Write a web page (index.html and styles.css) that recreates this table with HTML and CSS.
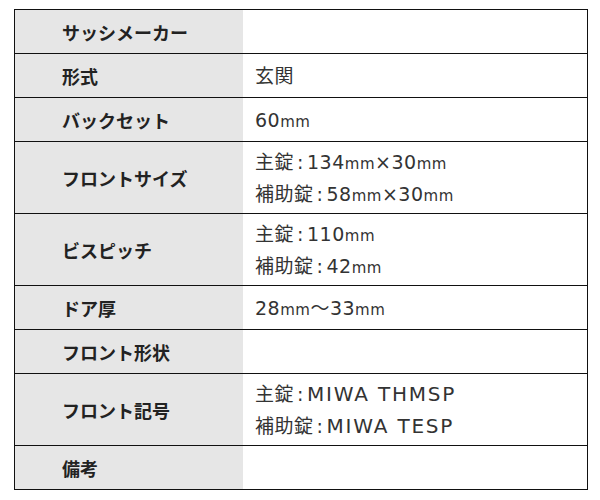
FILE: index.html
```html
<!DOCTYPE html>
<html lang="ja">
<head>
<meta charset="utf-8">
<link rel="stylesheet" href="styles.css">
</head>
<body>
<table class="spec">
  <tr><th>サッシメーカー</th><td></td></tr>
  <tr><th>形式</th><td>玄関</td></tr>
  <tr><th>バックセット</th><td>60<span class="u">mm</span></td></tr>
  <tr><th>フロントサイズ</th><td>主錠<span class="c">:</span>134<span class="u">mm</span>×30<span class="u">mm</span><br>補助錠<span class="c">:</span>58<span class="u">mm</span>×30<span class="u">mm</span></td></tr>
  <tr><th>ビスピッチ</th><td>主錠<span class="c">:</span>110<span class="u">mm</span><br>補助錠<span class="c">:</span>42<span class="u">mm</span></td></tr>
  <tr><th>ドア厚</th><td>28<span class="u">mm</span>〜33<span class="u">mm</span></td></tr>
  <tr><th>フロント形状</th><td></td></tr>
  <tr><th>フロント記号</th><td>主錠<span class="c">:</span><span class="code">MIWA THMSP</span><br>補助錠<span class="c">:</span><span class="code">MIWA TESP</span></td></tr>
  <tr><th>備考</th><td></td></tr>
</table>
</body>
</html>
```
FILE: styles.css
```css
html, body {
  margin: 0;
  padding: 0;
  background: #fff;
}
body {
  padding: 9px 0 0 14px;
}
.spec {
  border-collapse: collapse;
  width: 574px;
  border: 1px solid #111;
  line-height: 32px;
}
.spec tr {
  border-bottom: 1px solid #111;
}
.spec th {
  width: 181px;
  background: #e6e6e6;
  color: #222;
  font-family: "Noto Sans CJK JP", "Noto Sans", sans-serif;
  font-size: 18px;
  font-weight: bold;
  text-align: left;
  padding: 6px 0 5px 47px;
  vertical-align: middle;
}
.spec td {
  color: #333;
  font-family: "DejaVu Sans", "Noto Sans CJK JP", sans-serif;
  font-size: 19px;
  letter-spacing: 0.5px;
  padding: 4px 0 3px 12px;
  vertical-align: middle;
}
.u {
  font-size: 15px;
  line-height: 1;
}
.c {
  display: inline-block;
  width: 13px;
  text-align: center;
  line-height: 1;
}
.code {
  font-size: 20px;
  letter-spacing: 1.8px;
  line-height: 1;
}
```
